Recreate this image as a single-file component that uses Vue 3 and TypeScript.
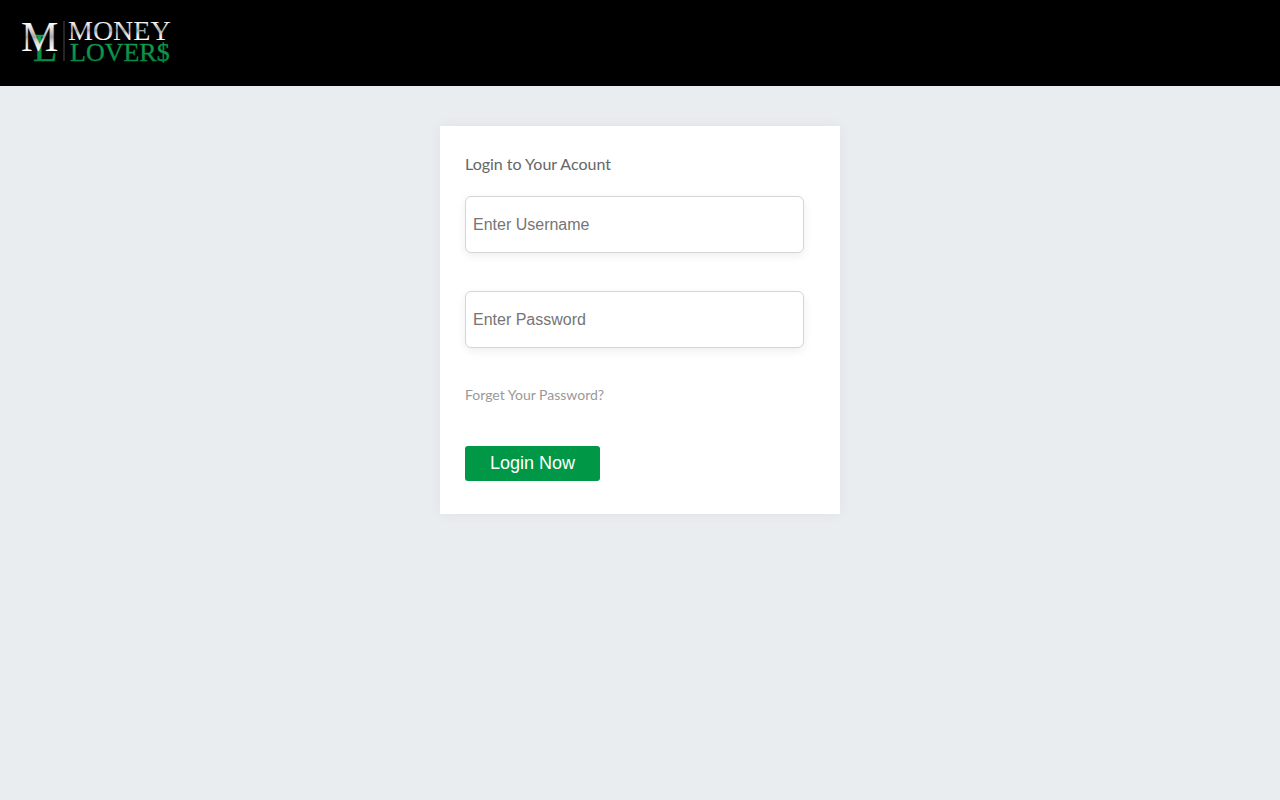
<script setup lang="ts">
import { ref } from 'vue'

const username = ref('')
const password = ref('')
</script>

<template>
  <div class="page">
    <header class="top-bar">
      <a class="brand" href="#" aria-label="Money Lovers">
        <svg class="logo" width="160" height="66" viewBox="0 0 160 66" aria-hidden="true">
          <defs>
            <linearGradient id="silver" x1="0" y1="0" x2="0" y2="1">
              <stop offset="0.2" stop-color="#ffffff" />
              <stop offset="0.5" stop-color="#a8a8a8" />
              <stop offset="0.6" stop-color="#d8d8d8" />
              <stop offset="0.8" stop-color="#ffffff" />
            </linearGradient>
            <linearGradient id="green" x1="0" y1="0" x2="0" y2="1">
              <stop offset="0.2" stop-color="#12a454" />
              <stop offset="0.8" stop-color="#078a43" />
            </linearGradient>
          </defs>
          <text class="green-letters" x="19" y="51" font-size="40">L</text>
          <text x="7" y="41" font-size="42" fill="url(#silver)">M</text>
          <path d="M50 11V51" stroke="#4b4b4b" />
          <text x="54" y="30" font-size="28" fill="url(#silver)">MONEY</text>
          <text class="green-letters" x="56" y="51" font-size="26">LOVER$</text>
        </svg>
      </a>
    </header>

    <main class="content">
      <form class="card" @submit.prevent>
        <h1 class="title">Login to Your Acount</h1>
        <input v-model="username" class="field" type="text" placeholder="Enter Username" aria-label="Username" />
        <input v-model="password" class="field" type="password" placeholder="Enter Password" aria-label="Password" />
        <a class="forgot" href="#">Forget Your Password?</a>
        <button class="submit" type="submit">Login Now</button>
      </form>
    </main>
  </div>
</template>

<style>
body {
  margin: 0;
  background: #e9edf0;
}
</style>

<style scoped>
.page {
  min-height: 100vh;
  background: #e9edf0;
  font-family: Lato, "Liberation Sans", sans-serif;
}

.top-bar {
  box-sizing: border-box;
  display: flex;
  align-items: flex-start;
  min-height: 86px;
  padding: 10px 14px;
  background: #000;
}

.brand,
.logo {
  display: block;
}

.logo text {
  font-family: "Liberation Serif", serif;
}

.green-letters {
  fill: url(#green);
  stroke: #078a43;
  stroke-width: 0.4;
}

.content {
  display: flex;
  justify-content: center;
  padding: 40px 20px;
}

.card {
  box-sizing: border-box;
  display: flex;
  flex-direction: column;
  align-items: flex-start;
  width: 100%;
  max-width: 400px;
  padding: 26px 36px 33px 25px;
  background: #fff;
  box-shadow: 0 0 12px rgba(60, 20, 90, 0.06);
}

.title {
  margin: 0 0 20px;
  color: #666;
  font-size: 16px;
  font-weight: 400;
  line-height: 24px;
}

.field {
  box-sizing: border-box;
  width: 100%;
  height: 57px;
  margin: 0 0 38px;
  padding: 0 7px;
  border: 1px solid #d5d5d5;
  border-radius: 6px;
  background: #fff;
  box-shadow: 0 3px 10px rgba(0, 0, 0, 0.07);
  color: #333;
  font-family: "Liberation Sans", Arial, sans-serif;
  font-size: 16px;
}

.field::placeholder {
  color: #757575;
  opacity: 1;
}

.forgot {
  margin-bottom: 42px;
  color: #999;
  font-size: 14px;
  line-height: 18px;
  text-decoration: none;
}

.submit {
  height: 35px;
  padding: 0 25px 1px;
  border: 0;
  border-radius: 3px;
  background: #009846;
  color: #fff;
  font-family: "Liberation Sans", Arial, sans-serif;
  font-size: 18px;
  cursor: pointer;
}
</style>
